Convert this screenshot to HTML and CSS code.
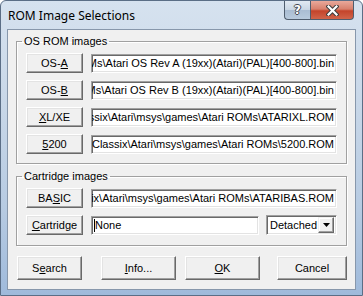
FILE: index.html
```html
<!DOCTYPE html>
<html lang="en">
<head>
  <meta charset="UTF-8">
  <title>ROM Image Selections</title>
  <link rel="stylesheet" href="styles.css">
</head>
<body>
  <div class="window">
    <div class="titlebar">
      <span class="title">ROM Image Selections</span>
      <div class="caption-buttons">
        <span class="cap-btn help"><span class="help-glyph">?</span></span>
        <span class="cap-btn close">
          <svg width="13" height="11" viewBox="0 0 13 11">
            <path d="M2.5 1.5 L10.5 9.5 M10.5 1.5 L2.5 9.5" stroke="#3d3d3d" stroke-width="4.2" stroke-linecap="square"/>
            <path d="M2.5 1.5 L10.5 9.5 M10.5 1.5 L2.5 9.5" stroke="#ffffff" stroke-width="2.2" stroke-linecap="square"/>
          </svg>
        </span>
      </div>
    </div>

    <div class="client">
      <fieldset class="group group-os">
        <legend>OS ROM images</legend>
        <div class="row">
          <button class="btn rom-btn">OS-<u>A</u></button>
          <div class="field"><span>C:\Program Files\RetroClassix\Atari\msys\games\Atari ROMs\Atari OS Rev A (19xx)(Atari)(PAL)[400-800].bin</span></div>
        </div>
        <div class="row">
          <button class="btn rom-btn">OS-<u>B</u></button>
          <div class="field"><span>C:\Program Files\RetroClassix\Atari\msys\games\Atari ROMs\Atari OS Rev B (19xx)(Atari)(PAL)[400-800].bin</span></div>
        </div>
        <div class="row">
          <button class="btn rom-btn"><u>X</u>L/XE</button>
          <div class="field"><span>C:\Program Files\RetroClassix\Atari\msys\games\Atari ROMs\ATARIXL.ROM</span></div>
        </div>
        <div class="row">
          <button class="btn rom-btn"><u>5</u>200</button>
          <div class="field"><span>C:\Program Files\RetroClassix\Atari\msys\games\Atari ROMs\5200.ROM</span></div>
        </div>
      </fieldset>

      <fieldset class="group group-cart">
        <legend>Cartridge images</legend>
        <div class="row">
          <button class="btn rom-btn">BA<u>S</u>IC</button>
          <div class="field"><span>C:\Program Files\RetroClassix\Atari\msys\games\Atari ROMs\ATARIBAS.ROM</span></div>
        </div>
        <div class="row">
          <button class="btn rom-btn"><u>C</u>artridge</button>
          <div class="field field-left"><span class="caret"></span><span>None</span></div>
          <div class="combo">
            <span class="combo-text">Detached</span>
            <span class="combo-arrow">
              <svg width="7" height="4" viewBox="0 0 7 4"><path d="M0 0 H7 L3.5 4 Z" fill="#000"/></svg>
            </span>
          </div>
        </div>
      </fieldset>

      <div class="actions">
        <button class="btn act-search">S<u>e</u>arch</button>
        <button class="btn act-info"><u>I</u>nfo...</button>
        <button class="btn act-ok"><u>O</u>K</button>
        <button class="btn act-cancel">Cancel</button>
      </div>
    </div>
  </div>
</body>
</html>
```

FILE: styles.css
```css
* {
    box-sizing: border-box;
}

body {
    margin: 0;
    font-family: "Liberation Sans", Arial, sans-serif;
    font-size: 11px;
    color: #000;
    background: #fff;
}

/* Window frame */
.window {
    width: 363px;
    height: 296px;
    display: flex;
    flex-direction: column;
    border: 1px solid #5b6e86;
    border-radius: 6px 6px 0 0;
    background: linear-gradient(180deg, #d6e2ef 0%, #c8d7e8 35%, #b7cbe2 70%, #9fbadb 100%);
}

.titlebar {
    height: 29px;
    display: flex;
    align-items: flex-start;
}

.title {
    margin-left: 7px;
    padding-top: 7px;
    font-family: "Noto Sans", "Liberation Sans", sans-serif;
    font-size: 12px;
    line-height: 15px;
    color: #000;
}

.caption-buttons {
    margin-left: auto;
    margin-right: 8px;
    display: flex;
}

.cap-btn {
    height: 19px;
    display: flex;
    align-items: center;
    justify-content: center;
    border: 1px solid #4f5d6e;
    border-top: none;
}

.help {
    width: 26px;
    border-right: none;
    border-radius: 0 0 0 4px;
    background: linear-gradient(180deg, #e1e9f2 0%, #c9d6e4 48%, #aabdd3 52%, #b8cadd 100%);
}

.help-glyph {
    font-family: "DejaVu Sans", sans-serif;
    font-weight: bold;
    font-size: 12px;
    line-height: 12px;
    color: #fff;
    text-shadow: 1px 0 0 #3f4650, -1px 0 0 #3f4650, 0 1px 0 #3f4650, 0 -1px 0 #3f4650;
}

.close {
    width: 44px;
    border-radius: 0 0 4px 0;
    background: linear-gradient(180deg, #e9a99b 0%, #d7806d 45%, #c4442b 55%, #d0644a 100%);
}

/* Client area */
.client {
    margin: 0 7px 6px 7px;
    height: 259px;
    padding-top: 4px;
    background: #f0f0f0;
    box-shadow: 0 0 0 1px #8797ab;
}

.group {
    margin: 0 8px;
    padding: 5px 9px 9px 9px;
    border: 1px solid #a0a0a0;
    box-shadow: inset 1px 1px 0 #fff, 1px 1px 0 #fff;
    display: flex;
    flex-direction: column;
    gap: 7px;
    min-width: 0;
}

.group legend {
    margin-left: -4px;
    padding: 0 2px;
    line-height: 14px;
}

.group-cart {
    margin-top: 5px;
    padding-bottom: 10px;
}

.row {
    display: flex;
    align-items: center;
    gap: 8px;
    height: 20px;
}

/* Classic 3D buttons */
.btn {
    font-family: inherit;
    font-size: 11px;
    color: #000;
    padding: 0;
    background: #f0f0f0;
    border: 1px solid;
    border-color: #fff #696969 #696969 #fff;
    box-shadow: inset -1px -1px 0 #a0a0a0, inset 1px 1px 0 #e3e3e3;
}

.rom-btn {
    width: 57px;
    height: 20px;
    flex: none;
}

/* Sunken edit fields */
.field {
    flex: 1;
    min-width: 0;
    height: 19px;
    display: flex;
    align-items: center;
    justify-content: flex-end;
    overflow: hidden;
    white-space: nowrap;
    padding: 0 2px;
    background: #fff;
    border: 1px solid;
    border-color: #a0a0a0 #fff #fff #a0a0a0;
    box-shadow: inset 1px 1px 0 #696969, inset -1px -1px 0 #e3e3e3;
}

.field span {
    flex: none;
}

.field-left {
    justify-content: flex-start;
    margin-right: -1px;
}

.caret {
    width: 1px;
    height: 13px;
    background: #000;
}

.combo {
    width: 71px;
    height: 20px;
    flex: none;
    display: flex;
    align-items: center;
    padding: 2px;
    background: #fff;
    border: 1px solid;
    border-color: #a0a0a0 #fff #fff #a0a0a0;
    box-shadow: inset 1px 1px 0 #696969, inset -1px -1px 0 #e3e3e3;
}

.combo-text {
    flex: 1;
    padding-left: 1px;
}

.combo-arrow {
    width: 16px;
    height: 16px;
    display: flex;
    align-items: center;
    justify-content: center;
    background: #f0f0f0;
    border: 1px solid;
    border-color: #f0f0f0 #696969 #696969 #f0f0f0;
    box-shadow: inset -1px -1px 0 #a0a0a0, inset 1px 1px 0 #fff;
}

/* Bottom button row */
.actions {
    display: flex;
    margin-top: 10px;
    padding-left: 9px;
}

.actions .btn {
    height: 24px;
}

.act-search {
    width: 65px;
}

.act-info {
    width: 75px;
    margin-left: 19px;
}

.act-ok {
    width: 75px;
    margin-left: 9px;
}

.act-cancel {
    width: 70px;
    margin-left: 17px;
}
```
